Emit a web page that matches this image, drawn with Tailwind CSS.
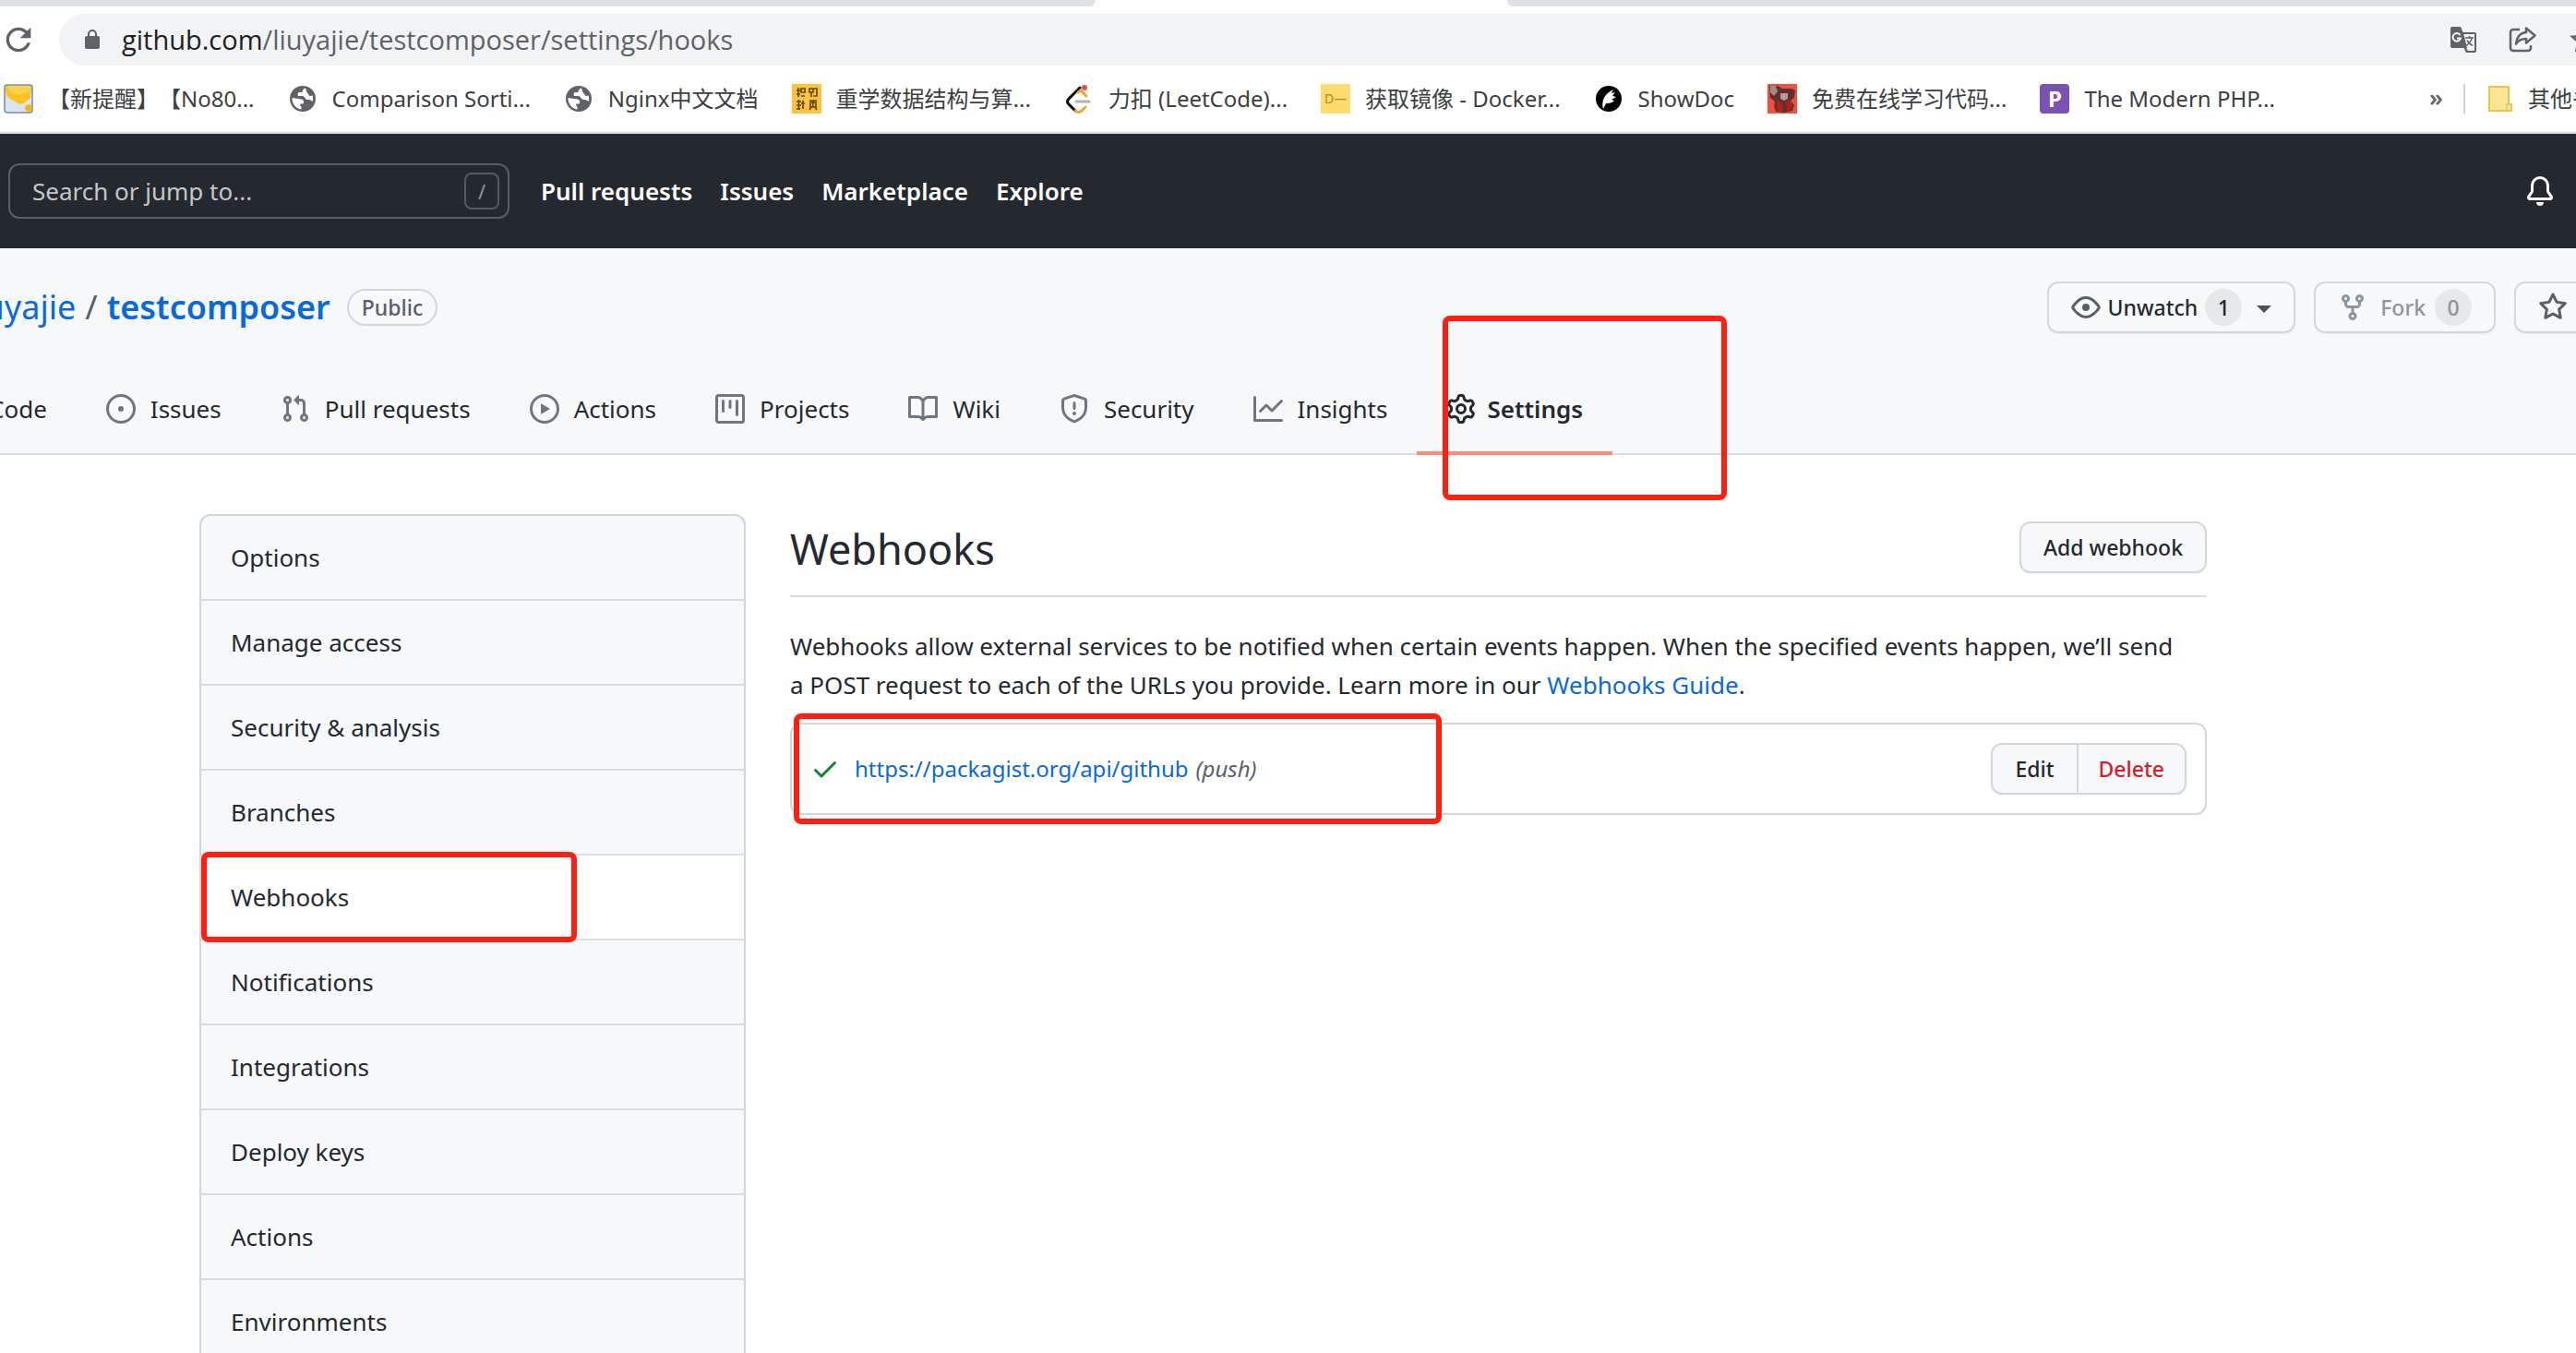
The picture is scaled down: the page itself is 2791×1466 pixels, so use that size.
<!DOCTYPE html>
<html lang="en">
<head>
<meta charset="utf-8">
<title>Webhooks · liuyajie/testcomposer</title>
<script src="https://cdn.jsdelivr.net/npm/@tailwindcss/browser@4"></script>
</head>
<body class="h-screen overflow-hidden bg-white font-['Noto_Sans','Noto_Sans_CJK_SC',sans-serif] text-[26px] leading-[42px] text-[#24292f]">

<!-- Shared octicon shapes -->
<svg class="hidden" aria-hidden="true">
  <symbol id="i-code" viewBox="0 0 16 16"><path fill-rule="evenodd" d="M4.72 3.22a.75.75 0 011.06 1.06L2.06 8l3.72 3.72a.75.75 0 11-1.06 1.06L.47 8.53a.75.75 0 010-1.06l4.25-4.25zm6.56 0a.75.75 0 10-1.06 1.06L13.94 8l-3.72 3.72a.75.75 0 101.06 1.06l4.25-4.25a.75.75 0 000-1.06l-4.25-4.25z"/></symbol>
  <symbol id="i-issue" viewBox="0 0 16 16"><path d="M8 9.5a1.5 1.5 0 100-3 1.5 1.5 0 000 3z"/><path fill-rule="evenodd" d="M8 0a8 8 0 100 16A8 8 0 008 0zM1.5 8a6.5 6.5 0 1113 0 6.5 6.5 0 01-13 0z"/></symbol>
  <symbol id="i-pr" viewBox="0 0 16 16"><path fill-rule="evenodd" d="M7.177 3.073L9.573.677A.25.25 0 0110 .854v4.792a.25.25 0 01-.427.177L7.177 3.427a.25.25 0 010-.354zM3.75 2.5a.75.75 0 100 1.5.75.75 0 000-1.5zm-2.25.75a2.25 2.25 0 113 2.122v5.256a2.251 2.251 0 11-1.5 0V5.372A2.25 2.25 0 011.5 3.25zM11 2.5h-1V4h1a1 1 0 011 1v5.628a2.251 2.251 0 101.5 0V5A2.5 2.5 0 0011 2.5zm1 10.25a.75.75 0 111.5 0 .75.75 0 01-1.5 0zM3.75 12a.75.75 0 100 1.5.75.75 0 000-1.5z"/></symbol>
  <symbol id="i-play" viewBox="0 0 16 16"><path fill-rule="evenodd" d="M1.5 8a6.5 6.5 0 1113 0 6.5 6.5 0 01-13 0zM8 0a8 8 0 100 16A8 8 0 008 0zM6.379 5.227A.25.25 0 006 5.442v5.117a.25.25 0 00.379.214l4.264-2.559a.25.25 0 000-.428L6.379 5.227z"/></symbol>
  <symbol id="i-project" viewBox="0 0 16 16"><path fill-rule="evenodd" d="M1.75 0A1.75 1.75 0 000 1.75v12.5C0 15.216.784 16 1.75 16h12.5A1.75 1.75 0 0016 14.25V1.75A1.75 1.75 0 0014.25 0H1.75zM1.5 1.75a.25.25 0 01.25-.25h12.5a.25.25 0 01.25.25v12.5a.25.25 0 01-.25.25H1.75a.25.25 0 01-.25-.25V1.75zM11.75 3a.75.75 0 00-.75.75v7.5a.75.75 0 001.5 0v-7.5a.75.75 0 00-.75-.75zm-8.25.75a.75.75 0 011.5 0v5.5a.75.75 0 01-1.5 0v-5.5zM8 3a.75.75 0 00-.75.75v3.5a.75.75 0 001.5 0v-3.5A.75.75 0 008 3z"/></symbol>
  <symbol id="i-book" viewBox="0 0 16 16"><path fill-rule="evenodd" d="M0 1.75A.75.75 0 01.75 1h4.253c1.227 0 2.317.59 3 1.501A3.744 3.744 0 0111.006 1h4.245a.75.75 0 01.75.75v10.5a.75.75 0 01-.75.75h-4.507a2.25 2.25 0 00-1.591.659l-.622.621a.75.75 0 01-1.06 0l-.622-.621A2.25 2.25 0 005.258 13H.75a.75.75 0 01-.75-.75V1.75zm8.755 3a2.25 2.25 0 012.25-2.25H14.5v9h-3.757c-.71 0-1.4.201-1.992.572l.004-7.322zm-1.504 7.324l.004-5.073-.002-2.253A2.25 2.25 0 005.003 2.5H1.5v9h3.757a3.75 3.75 0 011.994.574z"/></symbol>
  <symbol id="i-shield" viewBox="0 0 16 16"><path fill-rule="evenodd" d="M7.467.133a1.75 1.75 0 011.066 0l5.25 1.68A1.75 1.75 0 0115 3.48V7c0 1.566-.32 3.182-1.303 4.682-.983 1.498-2.585 2.813-5.032 3.855a1.7 1.7 0 01-1.33 0c-2.447-1.042-4.049-2.357-5.032-3.855C1.32 10.182 1 8.566 1 7V3.48a1.75 1.75 0 011.217-1.667l5.25-1.68zm.61 1.429a.25.25 0 00-.153 0l-5.25 1.68a.25.25 0 00-.174.238V7c0 1.358.275 2.666 1.057 3.86.784 1.194 2.121 2.34 4.366 3.297a.2.2 0 00.154 0c2.245-.956 3.582-2.104 4.366-3.298C13.225 9.666 13.5 8.36 13.5 7V3.48a.25.25 0 00-.174-.237l-5.25-1.68zM9 10.5a1 1 0 11-2 0 1 1 0 012 0zm-.25-5.75a.75.75 0 10-1.5 0v3a.75.75 0 001.5 0v-3z"/></symbol>
  <symbol id="i-graph" viewBox="0 0 16 16"><path fill-rule="evenodd" d="M1.5 1.75a.75.75 0 00-1.5 0v12.5c0 .414.336.75.75.75h14.5a.75.75 0 000-1.5H1.5V1.75zm14.28 2.53a.75.75 0 00-1.06-1.06L10 7.94 7.53 5.47a.75.75 0 00-1.06 0L3.22 8.72a.75.75 0 001.06 1.06L7 7.06l2.47 2.47a.75.75 0 001.06 0l5.25-5.25z"/></symbol>
  <symbol id="i-gear" viewBox="0 0 16 16"><path fill-rule="evenodd" d="M7.429 1.525a6.593 6.593 0 011.142 0c.036.003.108.036.137.146l.289 1.105c.147.56.55.967.997 1.189.174.086.341.183.501.29.417.278.97.423 1.53.27l1.102-.303c.11-.03.175.016.195.046.219.31.41.641.573.989.014.031.022.11-.059.19l-.815.806c-.411.406-.562.957-.53 1.456a4.588 4.588 0 010 .582c-.032.499.119 1.05.53 1.456l.815.806c.08.08.073.159.059.19a6.494 6.494 0 01-.573.99c-.02.029-.086.074-.195.045l-1.103-.303c-.559-.153-1.112-.008-1.529.27-.16.107-.327.204-.5.29-.449.222-.851.628-.998 1.189l-.289 1.105c-.029.11-.101.143-.137.146a6.613 6.613 0 01-1.142 0c-.036-.003-.108-.037-.137-.146l-.289-1.105c-.147-.56-.55-.967-.997-1.189a4.502 4.502 0 01-.501-.29c-.417-.278-.97-.423-1.53-.27l-1.102.303c-.11.03-.175-.016-.195-.046a6.492 6.492 0 01-.573-.989c-.014-.031-.022-.11.059-.19l.815-.806c.411-.406.562-.957.53-1.456a4.587 4.587 0 010-.582c.032-.499-.119-1.05-.53-1.456l-.815-.806c-.08-.08-.073-.159-.059-.19a6.44 6.44 0 01.573-.99c.02-.029.086-.075.195-.045l1.103.303c.559.153 1.112.008 1.529-.27.16-.107.327-.204.5-.29.449-.222.851-.628.998-1.189l.289-1.105c.029-.11.101-.143.137-.146zM8 0c-.236 0-.47.01-.701.03-.743.065-1.29.615-1.458 1.261l-.29 1.106c-.017.066-.078.158-.211.224a5.994 5.994 0 00-.668.386c-.123.082-.233.09-.3.071L3.27 2.776c-.644-.177-1.392.02-1.82.63a7.977 7.977 0 00-.704 1.217c-.315.675-.111 1.422.363 1.891l.815.806c.05.048.098.147.088.294a6.084 6.084 0 000 .772c.01.147-.038.246-.088.294l-.815.806c-.474.469-.678 1.216-.363 1.891.2.428.436.835.704 1.218.428.609 1.176.806 1.82.63l1.103-.303c.066-.019.176-.011.299.071.213.143.436.272.668.386.133.066.194.158.212.224l.289 1.106c.169.646.715 1.196 1.458 1.26a8.094 8.094 0 001.402 0c.743-.064 1.29-.614 1.458-1.26l.29-1.106c.017-.066.078-.158.211-.224a5.98 5.98 0 00.668-.386c.123-.082.233-.09.3-.071l1.102.302c.644.177 1.392-.02 1.82-.63.268-.382.505-.789.704-1.217.315-.675.111-1.422-.364-1.891l-.814-.806c-.05-.048-.098-.147-.088-.294a6.1 6.1 0 000-.772c-.01-.147.039-.246.088-.294l.814-.806c.475-.469.679-1.216.364-1.891a7.992 7.992 0 00-.704-1.218c-.428-.609-1.176-.806-1.82-.63l-1.103.303c-.066.019-.176.011-.299-.071a5.991 5.991 0 00-.668-.386c-.133-.066-.194-.158-.212-.224L10.16 1.29C9.99.645 9.444.095 8.701.031A8.094 8.094 0 008 0zm1.5 8a1.5 1.5 0 11-3 0 1.5 1.5 0 013 0zM11 8a3 3 0 11-6 0 3 3 0 016 0z"/></symbol>
  <symbol id="i-eye" viewBox="0 0 16 16"><path fill-rule="evenodd" d="M1.679 7.932c.412-.621 1.242-1.75 2.366-2.717C5.175 4.242 6.527 3.5 8 3.5c1.473 0 2.824.742 3.955 1.715 1.124.967 1.954 2.096 2.366 2.717a.119.119 0 010 .136c-.412.621-1.242 1.75-2.366 2.717C10.825 11.758 9.473 12.5 8 12.5c-1.473 0-2.824-.742-3.955-1.715C2.92 9.818 2.09 8.69 1.679 8.068a.119.119 0 010-.136zM8 2c-1.981 0-3.67.992-4.933 2.078C1.797 5.169.88 6.423.43 7.1a1.619 1.619 0 000 1.798c.45.678 1.367 1.932 2.637 3.024C4.329 13.008 6.019 14 8 14c1.981 0 3.67-.992 4.933-2.078 1.27-1.091 2.187-2.345 2.637-3.023a1.619 1.619 0 000-1.798c-.45-.678-1.367-1.932-2.637-3.023C11.671 2.992 9.981 2 8 2zm0 8a2 2 0 100-4 2 2 0 000 4z"/></symbol>
  <symbol id="i-fork" viewBox="0 0 16 16"><path fill-rule="evenodd" d="M5 3.25a.75.75 0 11-1.5 0 .75.75 0 011.5 0zm0 2.122a2.25 2.25 0 10-1.5 0v.878A2.25 2.25 0 005.75 8.5h1.5v2.128a2.251 2.251 0 101.5 0V8.5h1.5a2.25 2.25 0 002.25-2.25v-.878a2.25 2.25 0 10-1.5 0v.878a.75.75 0 01-.75.75h-4.5A.75.75 0 015 6.25v-.878zm3.75 7.378a.75.75 0 11-1.5 0 .75.75 0 011.5 0zm3-8.75a.75.75 0 100-1.5.75.75 0 000 1.5z"/></symbol>
  <symbol id="i-star" viewBox="0 0 16 16"><path fill-rule="evenodd" d="M8 .25a.75.75 0 01.673.418l1.882 3.815 4.21.612a.75.75 0 01.416 1.279l-3.046 2.97.719 4.192a.75.75 0 01-1.088.791L8 12.347l-3.766 1.98a.75.75 0 01-1.088-.79l.72-4.194L.818 6.374a.75.75 0 01.416-1.28l4.21-.611L7.327.668A.75.75 0 018 .25zm0 2.445L6.615 5.5a.75.75 0 01-.564.41l-3.097.45 2.24 2.184a.75.75 0 01.216.664l-.528 3.084 2.769-1.456a.75.75 0 01.698 0l2.77 1.456-.53-3.084a.75.75 0 01.216-.664l2.24-2.183-3.096-.45a.75.75 0 01-.564-.41L8 2.694v.001z"/></symbol>
  <symbol id="i-bell" viewBox="0 0 16 16"><path d="M8 16a2 2 0 001.985-1.75c.017-.137-.097-.25-.235-.25h-3.5c-.138 0-.252.113-.235.25A2 2 0 008 16z"/><path fill-rule="evenodd" d="M8 1.5A3.5 3.5 0 004.5 5v2.947c0 .346-.102.683-.294.97l-1.703 2.556a.018.018 0 00-.003.01l.001.006c0 .002.002.004.004.006a.017.017 0 00.006.004l.007.001h10.964l.007-.001a.016.016 0 00.006-.004.016.016 0 00.004-.006l.001-.007a.017.017 0 00-.003-.01l-1.703-2.554a1.75 1.75 0 01-.294-.97V5A3.5 3.5 0 008 1.5zM3 5a5 5 0 0110 0v2.947c0 .05.015.098.042.139l1.703 2.555A1.518 1.518 0 0113.482 13H2.518a1.518 1.518 0 01-1.263-2.36l1.703-2.554A.25.25 0 003 7.947V5z"/></symbol>
  <symbol id="i-check" viewBox="0 0 16 16"><path fill-rule="evenodd" d="M13.78 4.22a.75.75 0 010 1.06l-7.25 7.25a.75.75 0 01-1.06 0L2.22 9.28a.75.75 0 011.06-1.06L6 10.94l6.72-6.72a.75.75 0 011.06 0z"/></symbol>
  <symbol id="i-globe" viewBox="0 0 32 32"><circle cx="16" cy="16" r="14" fill="#5f6368"/><path fill="#fff" d="M19 4.500c-2 .5-3.500 2-3.500 4.500H12c-1.500 0-1.500 3-1 4h4.500c3 0 3 4 5.500 4h2c1.500 0 2 1.500 4 1.500.3-2 .2-4-.5-6-2 1-4 .5-4.500-1.500-.5-1.500-2-1.500-2-3.500zM4.500 15c-.3 6 3.500 11.500 10 12.500v-3c-1.500-.5-1.500-2-1-3h3c1.500-2 .5-4.500-2-5z"/></symbol>
</svg>

<!-- Browser tab strip -->
<div class="flex h-[7px] bg-white">
  <div class="w-[1187px] rounded-br-[12px] bg-[#dee1e6]"></div>
  <div class="w-[446px]"></div>
  <div class="flex-1 rounded-bl-[12px] bg-[#dee1e6]"></div>
</div>

<!-- Address bar -->
<div class="flex h-[72px] items-center gap-6 overflow-hidden pt-2 pb-2">
  <button type="button" aria-label="Reload" class="h-10 w-10 shrink-0">
    <svg viewBox="0 0 24 24" class="h-10 w-10 fill-[#5f6368]"><path d="M17.65 6.35C16.2 4.9 14.21 4 12 4c-4.42 0-7.990 3.580-7.990 8s3.570 8 7.990 8c3.730 0 6.840-2.550 7.730-6h-2.080c-.82 2.330-3.040 4-5.650 4-3.310 0-6-2.690-6-6s2.690-6 6-6c1.660 0 3.140.69 4.220 1.780L13 11h7V4l-2.350 2.350z"/></svg>
  </button>
  <div class="-mr-8 flex h-14 flex-1 items-center rounded-full bg-[#f1f3f4] pr-1.5 pl-6">
    <svg viewBox="0 0 24 24" class="mr-5 h-6 w-6 fill-[#5f6368]"><path d="M18 8h-1V6c0-2.760-2.240-5-5-5S7 3.240 7 6v2H6c-1.100 0-2 .9-2 2v10c0 1.100.9 2 2 2h12c1.100 0 2-.9 2-2V10c0-1.100-.9-2-2-2zM9 8V6a3 3 0 016 0v2z"/></svg>
    <span class="flex-1 font-['Open_Sans',sans-serif] text-[29px] whitespace-nowrap text-[#5f6368]"><span class="text-[#202124]">github.com</span>/liuyajie/testcomposer/settings/hooks</span>
    <div class="flex items-center gap-8">
      <svg viewBox="0 0 32 32" class="h-8 w-8"><path d="M4 2h9l2.500 6H28a2 2 0 012 2v18a2 2 0 01-2 2H19l-2.500-5H4a2 2 0 01-2-2V4a2 2 0 012-2z" fill="#5f6368"/><path d="M16.300 10H28v18h-7l-2-3h1z" fill="#f1f3f4"/><path d="M18 14h9M22.500 12v2M25 14c-.5 4-3 6.500-6 8.500M20 16.500c1 2.500 3 4.500 6 6" fill="none" stroke="#5f6368" stroke-width="1.500"/><path d="M12.500 11a4.300 4.300 0 10.500 3.500H9" fill="none" stroke="#f1f3f4" stroke-width="2"/></svg>
      <svg viewBox="0 0 32 32" class="h-8 w-8" fill="none" stroke="#5f6368" stroke-width="2.500" stroke-linejoin="round"><path d="M13 5H6a3 3 0 00-3 3v17a3 3 0 003 3h16a3 3 0 003-3v-3"/><path d="M20 3.500l9.500 8-9.500 8v-4.500c-5 0-8.500 1.500-11 5.500.5-6.500 4-12 11-12.500z"/></svg>
      <svg viewBox="0 0 24 24" class="h-9 w-9 fill-[#5f6368]"><path d="M22 9.240l-7.190-.62L12 2 9.190 8.630 2 9.240l5.460 4.730L5.820 21 12 17.270 18.180 21l-1.630-7.030L22 9.240zM12 15.400l-3.760 2.270 1-4.280-3.320-2.880 4.380-.38L12 6.100l1.710 4.040 4.380.38-3.320 2.880 1 4.280L12 15.400z"/></svg>
    </div>
  </div>
</div>

<!-- Bookmarks bar -->
<div class="flex h-[66px] items-start overflow-hidden border-b-2 border-[#d9dadd] pt-3 pl-1 text-[24px] leading-8 whitespace-nowrap text-[#3c4043] [text-spacing-trim:space-all]">
  <nav aria-label="Bookmarks" class="flex flex-1 gap-9 leading-8">
    <a href="#" class="flex gap-4"><svg viewBox="0 0 32 32" class="h-8 w-8"><rect x="1" y="1" width="30" height="30" rx="3" fill="#dbe4f1" stroke="#6d8bb5" stroke-width="1.500"/><path d="M3 2h27c.5 3 0 6-1 8 1 4-1 8-5 9-3 4-10 3-12-1C5 17 2 12 2 5z" fill="#fbc31f"/><path d="M4 2h25v5c-6 5-16 4-22 3z" fill="#fdd34a"/><circle cx="27" cy="26" r="3.800" fill="#fab313"/></svg>【新提醒】【No80...</a>
    <a href="#" class="flex gap-4"><svg class="h-8 w-8"><use href="#i-globe"/></svg>Comparison Sorti...</a>
    <a href="#" class="flex gap-4"><svg class="h-8 w-8"><use href="#i-globe"/></svg>Nginx中文文档</a>
    <a href="#" class="flex gap-4"><svg viewBox="0 0 32 32" class="h-8 w-8"><rect width="32" height="32" fill="#fdc23e"/><g fill="none" stroke="#5d4a1d" stroke-width="1.700"><path d="M5 7h4M7 4v10M5 11h4M10 5h4v4h-4zM10 13h4M19 5h4v4h-4zM21 9v5M24 5h3v8h-4M5 19h5M7.500 17v11M5 23h5M5 27h4M12 18v9M10 21h4M19 18h8M20 20h6v5h-6zM23 18v7M19 28l2-3M27 28l-2-3"/></g></svg>重学数据结构与算...</a>
    <a href="#" class="flex gap-4"><svg viewBox="0 0 32 32" class="h-8 w-8" fill="none" stroke-width="3" stroke-linecap="round"><path d="M17 4L5 16c-2 2-2 4 0 6l7 7" stroke="#0b0b0b"/><path d="M15 9l3-2 6 6M12 29c2 2 5 2 7 0l4-4" stroke="#f5a32f"/><path d="M13 19h14" stroke="#b3b3b3"/><circle cx="22" cy="4" r="2" fill="#d9534f" stroke="#d9534f" stroke-width="2"/></svg>力扣 (LeetCode)...</a>
    <a href="#" class="flex gap-4"><span class="h-8 w-8 bg-[#ffdc6b] text-center text-[14px] leading-8 text-[#a8872a]">D—</span>获取镜像 - Docker...</a>
    <a href="#" class="flex gap-4"><svg viewBox="0 0 32 32" class="h-8 w-8"><circle cx="16" cy="16" r="14"/><path d="M10 27c-2-7 0-16 11-21l-2 4 4-1-3 4 4 1-5 3 3 1c-3 3-7 3-9 3z" fill="#fff"/></svg>ShowDoc</a>
    <a href="#" class="flex gap-4"><svg viewBox="0 0 32 32" class="h-8 w-8"><rect width="32" height="32" fill="#f0503c"/><path d="M2 2h9l5 3h10l4 2-1 8-4 3 4 5-2 6-9 2-9-1-2-6 1-5-5-4z" fill="#5f3030"/><path d="M3 2h6l2 6-4 5-4-4z" fill="#9c8c88"/><path d="M14 10h8v6l-4 2-4-2z" fill="#b59a98"/><path d="M10 18l5 2 2 10h-6zM20 19h6l1 8-6 2z" fill="#b3201c"/></svg>免费在线学习代码...</a>
    <a href="#" class="flex gap-4"><span class="h-8 w-8 rounded bg-[#7952b3] text-center font-bold text-white">P</span>The Modern PHP...</a>
  </nav>
  <button type="button" aria-label="More bookmarks" class="mr-[22px] text-[26px] font-semibold leading-7 text-[#5f6368]">»</button>
  <div class="mr-6 h-8 w-0.5 bg-[#cfd0d3]"></div>
  <a href="#" class="-mr-11 flex gap-4"><svg viewBox="0 0 28 32" class="h-8 w-7"><path d="M2 3h21v19h3v7H2z" fill="#ffe593" stroke="#e9c64a" stroke-width="2"/><path d="M23 22h-2v6" fill="none" stroke="#e9c64a" stroke-width="1.500"/></svg>其他书签</a>
</div>

<!-- Site header -->
<header class="flex h-[124px] items-center bg-[#24292f] pr-[23px] pl-[9px] text-white">
  <div class="relative mr-[34px] w-[543px]">
    <input type="text" aria-label="Search" placeholder="Search or jump to..." class="h-[60px] w-full rounded-xl border-2 border-[#57606a] bg-[#24292f] px-6 placeholder:text-[#c4c7ca]">
    <kbd class="absolute top-[10px] right-[11px] flex h-10 w-[38px] items-center justify-center rounded-lg border-2 border-[#575b60] font-[inherit] text-[22px] text-[#8f9398]">/</kbd>
  </div>
  <nav aria-label="Global" class="flex flex-1 gap-[30px] font-semibold">
    <a href="#">Pull requests</a>
    <a href="#">Issues</a>
    <a href="#">Marketplace</a>
    <a href="#">Explore</a>
  </nav>
  <a href="#" aria-label="Notifications"><svg class="h-8 w-8 fill-white"><use href="#i-bell"/></svg></a>
</header>

<!-- Repository header -->
<div class="border-b-2 border-[#d8dee4] bg-[#f6f8fa] pt-9">
  <div class="flex h-14 items-center">
    <h1 class="-ml-[36px] flex items-center text-[36px]">
      <a href="#" class="text-[#0969da]">liuyajie</a>
      <span class="mx-[10px] text-[#57606a]">/</span>
      <a href="#" class="font-semibold text-[#0969da]">testcomposer</a>
    </h1>
    <span class="ml-[18px] flex h-10 items-center rounded-full border-2 border-[#d0d7de] px-[14px] text-[23px] font-medium text-[#57606a]">Public</span>
    <div class="-mr-[93px] ml-auto flex gap-5 text-[23px] font-medium">
      <button type="button" class="flex h-14 items-center rounded-xl border-2 border-[#d5d8da] px-6 shadow-xs">
        <svg class="mr-2 h-8 w-8 fill-[#57606a]"><use href="#i-eye"/></svg>Unwatch
        <span class="ml-2 flex h-10 w-10 items-center justify-center rounded-full bg-[#e6e8ea]">1</span>
        <span class="mt-1 ml-4 border-x-8 border-t-8 border-x-transparent border-t-[#4a5056]"></span>
      </button>
      <button type="button" class="flex h-14 items-center rounded-xl border-2 border-[#d5d8da] px-6 text-[#8c959f] shadow-xs">
        <svg class="mr-[14px] h-8 w-8 fill-[#8c959f]"><use href="#i-fork"/></svg>Fork
        <span class="ml-[10px] flex h-10 w-10 items-center justify-center rounded-full bg-[#e6e8ea]">0</span>
      </button>
      <button type="button" aria-label="Star" class="flex h-14 w-[160px] items-center rounded-xl border-2 border-[#d5d8da] px-6 shadow-xs">
        <svg class="h-8 w-8 shrink-0 fill-[#57606a]"><use href="#i-star"/></svg>
      </button>
    </div>
  </div>

  <nav aria-label="Repository" class="mt-9 -mb-0.5 -ml-[92px] flex">
    <a href="#" class="flex h-24 items-center gap-4 border-b-4 border-transparent px-8"><svg class="h-8 w-8 fill-[#6e7781]"><use href="#i-code"/></svg>Code</a>
    <a href="#" class="flex h-24 items-center gap-4 border-b-4 border-transparent px-8"><svg class="h-8 w-8 fill-[#6e7781]"><use href="#i-issue"/></svg>Issues</a>
    <a href="#" class="flex h-24 items-center gap-4 border-b-4 border-transparent px-8"><svg class="h-8 w-8 fill-[#6e7781]"><use href="#i-pr"/></svg>Pull requests</a>
    <a href="#" class="flex h-24 items-center gap-4 border-b-4 border-transparent px-8"><svg class="h-8 w-8 fill-[#6e7781]"><use href="#i-play"/></svg>Actions</a>
    <a href="#" class="flex h-24 items-center gap-4 border-b-4 border-transparent px-8"><svg class="h-8 w-8 fill-[#6e7781]"><use href="#i-project"/></svg>Projects</a>
    <a href="#" class="flex h-24 items-center gap-4 border-b-4 border-transparent px-8"><svg class="h-8 w-8 fill-[#6e7781]"><use href="#i-book"/></svg>Wiki</a>
    <a href="#" class="flex h-24 items-center gap-4 border-b-4 border-transparent px-8"><svg class="h-8 w-8 fill-[#6e7781]"><use href="#i-shield"/></svg>Security</a>
    <a href="#" class="flex h-24 items-center gap-4 border-b-4 border-transparent px-8"><svg class="h-8 w-8 fill-[#6e7781]"><use href="#i-graph"/></svg>Insights</a>
    <a href="#" aria-current="page" class="relative flex h-24 items-center gap-3 border-b-4 border-[#fd8c73] px-8 font-semibold"><svg class="h-8 w-8 fill-[#24292f]"><use href="#i-gear"/></svg>Settings
      <span class="absolute -top-[55px] left-7 h-[200px] w-[308px] rounded-lg border-6 border-[#ff1f10]"></span>
    </a>
  </nav>
</div>

<main class="flex items-start gap-12 pt-16 pr-[400px] pl-[216px]">
  <!-- Settings menu -->
  <nav aria-label="Settings" class="w-[592px] shrink-0 divide-y-2 divide-[#d8dee4] rounded-t-xl border-2 border-b-0 border-[#d0d7de] bg-[#f6f8fa]">
    <a href="#" class="block px-8 py-6">Options</a>
    <a href="#" class="block px-8 py-6">Manage access</a>
    <a href="#" class="block px-8 py-6">Security &amp; analysis</a>
    <a href="#" class="block px-8 py-6">Branches</a>
    <a href="#" aria-current="page" class="relative block bg-white px-8 py-6">Webhooks
      <span class="absolute -top-1 -bottom-1 left-0 w-[407px] rounded-lg border-6 border-[#ff1f10]"></span>
    </a>
    <a href="#" class="block px-8 py-6">Notifications</a>
    <a href="#" class="block px-8 py-6">Integrations</a>
    <a href="#" class="block px-8 py-6">Deploy keys</a>
    <a href="#" class="block px-8 py-6">Actions</a>
    <a href="#" class="block px-8 py-6">Environments</a>
  </nav>

  <section class="flex-1">
    <div class="flex items-center border-b-2 border-[#d8dee4] pt-2 pb-6">
      <h2 class="flex-1 pt-1 text-[45px] leading-[52px]">Webhooks</h2>
      <button type="button" class="h-14 rounded-xl border-2 border-[#d5d8da] bg-[#f6f8fa] px-6 text-[23px] font-medium shadow-xs">Add webhook</button>
    </div>
    <p class="mt-8 pr-6">Webhooks allow external services to be notified when certain events happen. When the specified events happen, we’ll send a POST request to each of the URLs you provide. Learn more in our <a href="#" class="text-[#0969da]">Webhooks Guide</a>.</p>
    <div class="relative mt-5 flex h-[100px] items-center rounded-xl border-2 border-[#d0d7de] px-5 text-[24px]">
      <svg class="mr-4 h-8 w-8 fill-[#1a7f37]"><use href="#i-check"/></svg>
      <a href="#" class="mr-2 text-[#0969da]">https://packagist.org/api/github</a>
      <em class="flex-1 text-[#57606a]">(push)</em>
      <div class="flex h-14 rounded-xl border-2 border-[#d5d8da] bg-[#f6f8fa] text-[23px] font-medium shadow-xs">
        <button type="button" class="border-r-2 border-[#d5d8da] px-6">Edit</button>
        <button type="button" class="px-[22px] text-[#cf222e]">Delete</button>
      </div>
      <span class="absolute -top-3 left-0.5 h-[120px] w-[702px] rounded-lg border-6 border-[#ff1f10]"></span>
    </div>
  </section>
</main>
</body>
</html>
